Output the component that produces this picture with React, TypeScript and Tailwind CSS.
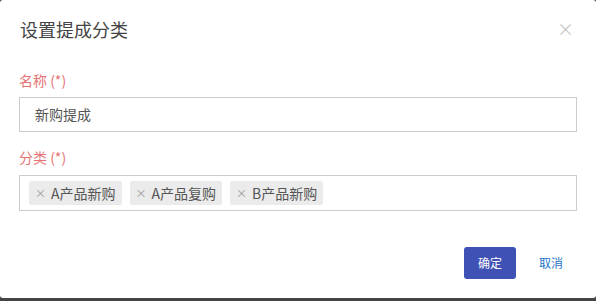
import React from "react";

const Tag = ({ label }: { label: string }) => (
  <span className="flex h-[24px] items-center rounded-[2px] bg-[#ebebeb] px-[6px] text-[14px] text-[#555]">
    <span className="mr-[5px] text-[11px] text-[#999]">×</span>
    {label}
  </span>
);

export default function App() {
  return (
    <div
      className="h-[301px] w-[596px] bg-[#444]"
      style={{ fontFamily: '"Noto Sans CJK SC", "Noto Sans", sans-serif' }}
    >
      <div className="flex h-[298px] w-[596px] flex-col rounded-[3px] bg-white">
        <div className="flex items-center justify-between pl-[20px] pr-[22px] pt-[16px]">
          <span className="text-[18px] leading-[26px] text-[#444]">设置提成分类</span>
          <span className="text-[17px] leading-[26px] text-[#c8c8c8]">×</span>
        </div>
        <div className="px-[19px] pt-[28px]">
          <div className="text-[14px] leading-[20px] text-[#e57373]">名称 (*)</div>
          <div className="mt-[7px] flex h-[35px] w-[558px] items-center border border-[#ccc] pl-[15px] text-[14px] text-[#555]">
            新购提成
          </div>
          <div className="mt-[15px] text-[14px] leading-[20px] text-[#e57373]">分类 (*)</div>
          <div className="mt-[8px] flex h-[36px] w-[558px] items-center gap-[8px] border border-[#ccc] pl-[9px]">
            <Tag label="A产品新购" />
            <Tag label="A产品复购" />
            <Tag label="B产品新购" />
          </div>
        </div>
        <div className="flex items-center justify-end pr-[33px] pt-[36px]">
          <button className="h-[32px] w-[52px] rounded-[3px] bg-[#3f51b5] text-[12px] text-white">
            确定
          </button>
          <button className="ml-[23px] text-[12px] text-[#1e73c8]">取消</button>
        </div>
      </div>
    </div>
  );
}
